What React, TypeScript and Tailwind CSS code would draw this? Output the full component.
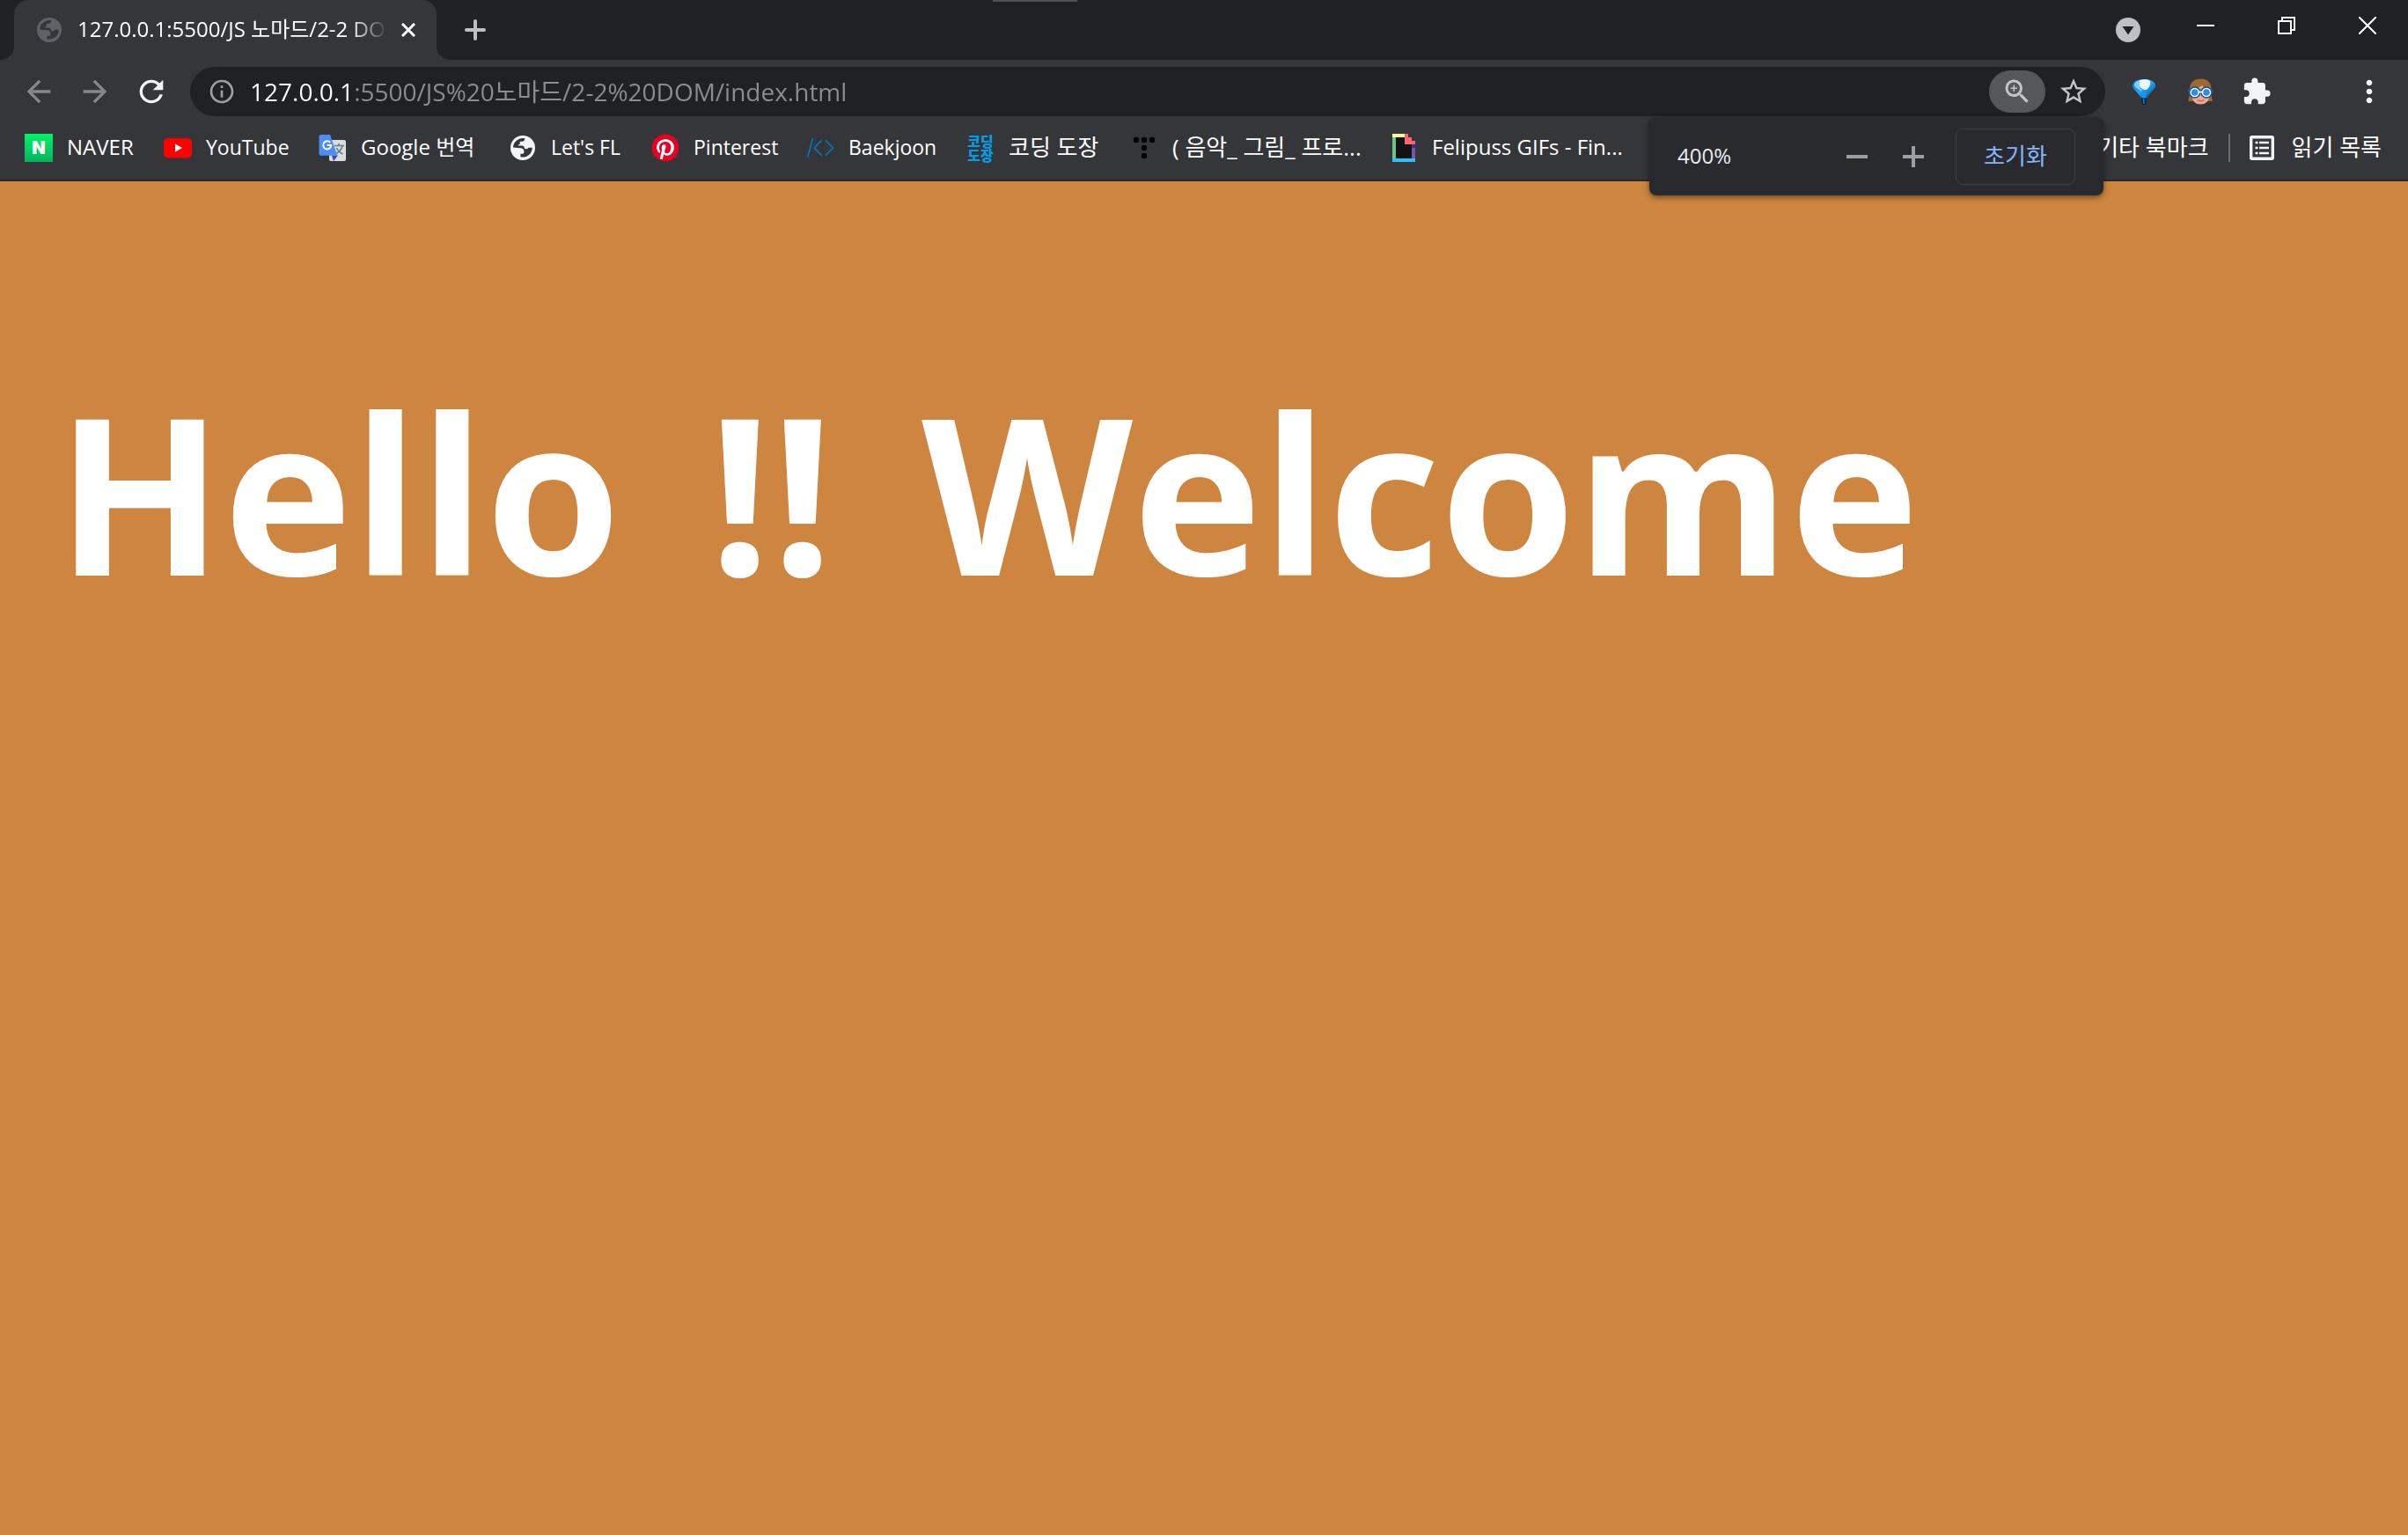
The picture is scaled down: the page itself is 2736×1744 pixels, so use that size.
import type { ReactNode } from "react";
import { FaPinterest } from "react-icons/fa";
import {
  MdArrowBack,
  MdArrowForward,
  MdExtension,
  MdInfoOutline,
  MdMoreVert,
  MdRefresh,
  MdStarBorder,
  MdZoomIn,
} from "react-icons/md";

function Globe({ className }: { className: string }) {
  return (
    <svg viewBox="0 0 28 28" className={className} aria-hidden="true">
      <circle cx="14" cy="14" r="14" fill="currentColor" />
      <path
        className="fill-[#35363a]"
        d="M3 13.400C3.200 8 8 3.200 14 3h2.200v.8c0 1.800-1.200 3-3 3h-1.600c-.6 0-.9.4-.9.9v1.400c0 .8-.5 1.300-1.300 1.300h-.6v.5c0 .4.3.6.7.6h3.700c1.500 0 2.500 1 2.600 2.400.1.8.6 1.300 1.400 1.300h1.400c1.100 0 1.200-1.500 2.500-1.500h3.700C24.600 20 20 24.600 14 24.600c-1 0-1.700-.1-2.600-.4v-3.400h1.600c1.500 0 2.500-1 2.500-2.400 0-2.500-1.500-4.200-4.200-4.200z"
      />
    </svg>
  );
}

function NaverIcon() {
  return (
    <span className="flex h-8 w-8 items-center justify-center bg-linear-to-b from-[#03f468] to-[#03b45c] font-[Inter] text-[20px] leading-none font-black text-white">
      N
    </span>
  );
}

function YouTubeIcon() {
  return (
    <svg viewBox="0 0 32 32" className="h-8 w-8" aria-hidden="true">
      <rect x="0" y="5" width="32" height="22.500" rx="5" fill="#f00" />
      <path d="M13 11.400 21 16l-8 4.800z" fill="#fff" />
    </svg>
  );
}

function TranslateIcon() {
  return (
    <svg viewBox="0 0 32 32" className="h-8 w-8" aria-hidden="true">
      <rect x="12" y="7" width="19" height="24" rx="2" fill="#dcdcdc" />
      <g stroke="#607d8b" strokeWidth="1.600" fill="none">
        <path d="M18 13.500h11M23 11v2.500M27 14c-1 4-4 7-8 9M20.500 16c1.500 3.500 4 5.500 7 7" />
      </g>
      <path d="M15 24.500h7L17 31z" fill="#3949ab" />
      <path d="M2.500 1H13l8.500 23.700H2.500a2 2 0 0 1-2-2V3a2 2 0 0 1 2-2z" fill="#4e8df5" />
      <path d="M13.200 9.800a4.600 4.600 0 1 0 1.200 3.200H9.800" fill="none" stroke="#fff" strokeWidth="1.900" />
    </svg>
  );
}

function PinterestIcon() {
  return (
    <span className="flex h-8 w-8 items-center justify-center">
      <FaPinterest className="h-8 w-8 rounded-full bg-[radial-gradient(circle,#ffffff_14px,transparent_14px)] text-[#e60023]" />
    </span>
  );
}

function BaekjoonIcon() {
  return (
    <svg viewBox="0 0 32 32" className="h-8 w-8" fill="none" stroke="#0b70b3" strokeWidth="1.800" aria-hidden="true">
      <path d="M7.500 5 1.500 27" />
      <path d="M17.500 7.500 9 16l8.500 8.500M22 7.500l8.500 8.500-8.500 8.500" />
    </svg>
  );
}

function DojangIcon() {
  return (
    <span className="flex h-8 w-8 flex-col items-center justify-center font-['Noto_Sans_CJK_KR',sans-serif] text-[16px] leading-4 font-black text-[#009fe8]">
      <span>코딩</span>
      <span>도장</span>
    </span>
  );
}

function TistoryIcon() {
  return (
    <svg viewBox="0 0 32 32" className="h-8 w-8" fill="#000" aria-hidden="true">
      <circle cx="7" cy="7" r="3.200" />
      <circle cx="16" cy="7" r="3.200" />
      <circle cx="25" cy="7" r="3.200" />
      <circle cx="16" cy="16" r="3.200" />
      <circle cx="16" cy="25" r="3.200" />
    </svg>
  );
}

function GiphyIcon() {
  return (
    <svg viewBox="0 0 32 32" className="h-8 w-8" shapeRendering="crispEdges" aria-hidden="true">
      <path d="M7 4h18v24H7z" fill="#131313" />
      <path d="M3 0h14v4H3z" fill="#fff799" />
      <path d="M3 4h4v24H3z" fill="#6fc284" />
      <path d="M3 28h26v4H3z" fill="#2fc0f5" />
      <path d="M25 12h4v4h-4z" fill="#4a2a80" />
      <path d="M25 16h4v12h-4z" fill="#7b55a5" />
      <path d="M17 0h4v4h4v4h4v4H17z" fill="#f26a6b" />
    </svg>
  );
}

const bookmarks: { label: string; icon: ReactNode; width: string; size: string }[] = [
  { label: "NAVER", icon: <NaverIcon />, width: "w-[158px]", size: "text-[24px]" },
  { label: "YouTube", icon: <YouTubeIcon />, width: "w-44", size: "text-[23px]" },
  { label: "Google 번역", icon: <TranslateIcon />, width: "w-[216px]", size: "text-[24px]" },
  { label: "Let's FL", icon: <Globe className="mx-[2px] h-7 w-7 text-[#f1f3f4]" />, width: "w-[162px]", size: "text-[23px]" },
  { label: "Pinterest", icon: <PinterestIcon />, width: "w-44", size: "text-[23px]" },
  { label: "Baekjoon", icon: <BaekjoonIcon />, width: "w-[182px]", size: "text-[23px]" },
  { label: "코딩 도장", icon: <DojangIcon />, width: "w-[186px]", size: "text-[26px]" },
  { label: "( 음악_ 그림_ 프로...", icon: <TistoryIcon />, width: "w-[295px]", size: "text-[26px]" },
  { label: "Felipuss GIFs - Fin...", icon: <GiphyIcon />, width: "w-[290px]", size: "text-[24px]" },
];

function TabStrip() {
  return (
    <div className="relative flex h-[68px] items-center bg-[#202124]">
      <span className="absolute top-0 left-[43%] h-[2px] w-24 -translate-x-1/2 bg-[#504f50]" />
      <span className="h-4 w-4 self-end bg-[radial-gradient(circle_at_top_left,transparent_16px,#35363a_16px)]" />
      <div className="flex h-full w-[480px] items-center rounded-t-2xl bg-[#35363a] pl-[26px]">
        <Globe className="h-7 w-7 shrink-0 text-[#5f6368]" />
        <span className="ml-[18px] w-[352px] overflow-hidden mask-r-from-88% mask-r-to-100% pb-[2px] text-[24px] leading-8 whitespace-nowrap">
          127.0.0.1:5500/JS 노마드/2-2 DOM
        </span>
        <button aria-label="Close tab" className="ml-[10px] flex h-7 w-7 items-center justify-center">
          <svg viewBox="0 0 16 16" className="h-4 w-4" fill="none" stroke="#fff" strokeWidth="3">
            <path d="m1 1 14 14M15 1 1 15" />
          </svg>
        </button>
      </div>
      <span className="h-4 w-4 self-end bg-[radial-gradient(circle_at_top_right,transparent_16px,#35363a_16px)]" />
      <button aria-label="New tab" className="flex h-14 w-14 items-center justify-center text-[#bdc1c6]">
        <svg viewBox="0 0 24 24" className="h-6 w-6" stroke="currentColor" strokeWidth="4" strokeLinecap="round">
          <path d="M12 2v20M2 12h20" />
        </svg>
      </button>
      <div className="flex-1" />
      <button aria-label="Search tabs" className="mr-7">
        <svg viewBox="0 0 28 28" className="h-7 w-7">
          <circle cx="14" cy="14" r="14" fill="#bdc1c6" />
          <path d="M7.500 10h13L14 19.500z" fill="#202124" />
        </svg>
      </button>
      <div className="flex h-[58px] self-start">
        <button aria-label="Minimize" className="flex w-[92px] items-center justify-center">
          <span className="h-[2px] w-5 bg-white" />
        </button>
        <button aria-label="Restore" className="flex w-[92px] items-center justify-center">
          <svg viewBox="0 0 20 20" className="h-5 w-5" fill="none" stroke="#fff" strokeWidth="2" shapeRendering="crispEdges">
            <path d="M1 5h14v14H1zM5 5V1h14v14h-4" />
          </svg>
        </button>
        <button aria-label="Close window" className="flex w-[92px] items-center justify-center">
          <svg viewBox="0 0 20 20" className="h-5 w-5" fill="none" stroke="#fff" strokeWidth="2">
            <path d="m0 0 20 20M20 0 0 20" />
          </svg>
        </button>
      </div>
    </div>
  );
}

function ToolButton({ label, className = "", children }: { label: string; className?: string; children: ReactNode }) {
  return (
    <button aria-label={label} className={`flex h-12 w-16 shrink-0 items-center justify-center ${className}`}>
      {children}
    </button>
  );
}

function BalloonIcon() {
  return (
    <svg viewBox="0 0 26 29" className="h-[29px] w-[26px]" aria-hidden="true">
      <defs>
        <linearGradient id="balloon" x1="0" x2="1" y1="0" y2="1">
          <stop offset="0" stopColor="#0a6fd0" />
          <stop offset="0.5" stopColor="#1ea7ff" />
          <stop offset="1" stopColor="#04467f" />
        </linearGradient>
      </defs>
      <path d="M0 7.500C0 2.500 5 0 13 0s13 2.500 13 7.500c0 3.500-7 8.500-10 14h-6C7 16 0 11 0 7.500z" fill="url(#balloon)" />
      <path d="M8 1c4-1.300 9-1 11.500.4C21.500 4 19.500 9.500 16 12 10 12.500 5.500 7 8 1z" fill="#eaf7ff" />
      <path d="M2 5.500C3 3 5 1.800 8 1c-1.800 5 1 10 3.500 13C7 12 1 9 2 5.500z" fill="#7fd0ff" />
      <path d="M10.500 14.500 13 12.500l3 1.500-1.500 7.500h-3z" fill="#1597f2" />
      <path d="M10 21.500h6L15 29h-4z" fill="#03223f" />
      <path d="M12 22h1.500v6H12z" fill="#1b7fc6" />
    </svg>
  );
}

function GogglesIcon() {
  return (
    <svg viewBox="0 0 30 30" className="h-[30px] w-[30px]" aria-hidden="true">
      <path d="M3 15C2 6 7 .5 15.500.5S28.500 6 27.500 15c0 4 .5 8 1.500 11H1c1-3 2-7 2-11z" fill="#a2672f" />
      <path d="M6 13c3 0 8-2 11-5 2 3 5 4.500 8 5v8c0 5-4.500 8.500-9.700 8.500S6 26 6 21z" fill="#efa98c" />
      <path d="M11.500 24.500c2 1.500 6 1.500 8 0" fill="none" stroke="#d9625a" strokeWidth="1.500" />
      <path d="M1 14h28" stroke="#1565c0" strokeWidth="3" />
      <circle cx="8.700" cy="16" r="6.700" fill="#0d4f9e" />
      <circle cx="22" cy="16" r="6.700" fill="#0d4f9e" />
      <circle cx="8.700" cy="16" r="5.300" fill="#fff" />
      <circle cx="22" cy="16" r="5.300" fill="#fff" />
      <circle cx="8.700" cy="16" r="3.800" fill="#2b8df0" />
      <circle cx="22" cy="16" r="3.800" fill="#2b8df0" />
      <path d="M13.500 15.500h3.500" stroke="#fff" strokeWidth="1.800" />
    </svg>
  );
}

function Toolbar() {
  return (
    <div className="flex h-[72px] items-center px-3">
      <ToolButton label="Back" className="text-[#85878b]">
        <MdArrowBack className="h-10 w-10" />
      </ToolButton>
      <ToolButton label="Forward" className="text-[#85878b]">
        <MdArrowForward className="h-10 w-10" />
      </ToolButton>
      <ToolButton label="Reload" className="text-[#f1f3f4]">
        <MdRefresh className="h-10 w-10" />
      </ToolButton>
      <div className="mx-3 flex h-14 min-w-0 flex-1 items-center rounded-full bg-[#202124] pr-1 pl-5">
        <MdInfoOutline className="h-8 w-8 shrink-0 text-[#9aa0a6]" />
        <input
          aria-label="Address"
          defaultValue="127.0.0.1:5500/JS%20노마드/2-2%20DOM/index.html"
          className="ml-4 min-w-0 flex-1 bg-[linear-gradient(90deg,#ffffff_118px,#8b8d90_118px)] bg-clip-text text-[28px] leading-10 text-transparent outline-none"
        />
        <ToolButton label="Zoom" className="rounded-full bg-[#565759] text-[#c4c5c6]">
          <MdZoomIn className="h-9 w-9" />
        </ToolButton>
        <ToolButton label="Bookmark this page" className="text-[#c4c5c6]">
          <MdStarBorder className="h-9 w-9" />
        </ToolButton>
      </div>
      <ToolButton label="Balloon extension">
        <BalloonIcon />
      </ToolButton>
      <ToolButton label="Goggles extension">
        <GogglesIcon />
      </ToolButton>
      <ToolButton label="Extensions" className="mr-16 text-[#f1f3f4]">
        <MdExtension className="h-[34px] w-[34px]" />
      </ToolButton>
      <ToolButton label="Menu" className="text-[#f1f3f4]">
        <MdMoreVert className="h-10 w-10" />
      </ToolButton>
    </div>
  );
}

function BookmarkBar() {
  return (
    <div className="border-b-2 border-[#28292c] pb-2">
      <nav className="flex h-14 items-center pr-[30px] pl-7">
        {bookmarks.map((b) => (
          <a key={b.label} href="#" className={`flex shrink-0 items-center gap-4 whitespace-nowrap ${b.width}`}>
            {b.icon}
            <span className={`pb-[2px] leading-8 ${b.size}`}>{b.label}</span>
          </a>
        ))}
        <div className="flex-1" />
        <a href="#" className="pb-[2px] text-[26px] leading-8 whitespace-nowrap">
          기타 북마크
        </a>
        <span className="mx-[22px] h-8 w-[2px] bg-[#6b6d70]" />
        <a href="#" className="flex items-center gap-5 whitespace-nowrap">
          <svg viewBox="0 0 28 28" className="h-7 w-7 text-[#f1f3f4]" fill="none" stroke="currentColor" aria-hidden="true">
            <rect x="1.700" y="1.700" width="24.600" height="24.600" rx="1" strokeWidth="3.400" />
            <path d="M6.500 8h3M6.500 14h3M6.500 20h3M11 8h11M11 14h11M11 20h11" strokeWidth="2.600" />
          </svg>
          <span className="pb-[2px] text-[26px] leading-8">읽기 목록</span>
        </a>
      </nav>
    </div>
  );
}

function ZoomBubble() {
  return (
    <div
      role="dialog"
      aria-label="Page zoom"
      className="absolute top-[133px] right-[346px] flex h-[89px] w-[516px] items-center rounded-lg bg-[#292a2d] px-8 shadow-[0_2px_6px_rgba(0,0,0,0.5)]"
    >
      <span className="flex-1 pb-[2px] text-[24px] leading-8 text-[#e8eaed]">400%</span>
      <ToolButton label="Zoom out">
        <span className="h-1 w-6 bg-[#9aa0a6]" />
      </ToolButton>
      <ToolButton label="Zoom in">
        <svg viewBox="0 0 24 24" className="h-6 w-6" stroke="#9aa0a6" strokeWidth="4">
          <path d="M12 0v24M0 12h24" />
        </svg>
      </ToolButton>
      <button className="ml-4 h-16 w-[136px] rounded-lg border border-[#3c4043] pb-[2px] text-[26px] leading-8 text-[#8ab4f8]">
        초기화
      </button>
    </div>
  );
}

export default function App() {
  return (
    <div className="flex min-h-screen flex-col overflow-x-hidden bg-[#cd853f] font-['Open_Sans','Noto_Sans_CJK_KR',sans-serif] text-white">
      <header className="relative bg-[#35363a]">
        <TabStrip />
        <Toolbar />
        <BookmarkBar />
        <ZoomBubble />
      </header>
      <main className="px-16 pt-[228px]">
        <h1 className="flex flex-wrap gap-x-[100px] text-[248px] leading-none font-bold">
          <span>Hello</span> <span>!!</span> <span>Welcome</span>
        </h1>
      </main>
    </div>
  );
}
